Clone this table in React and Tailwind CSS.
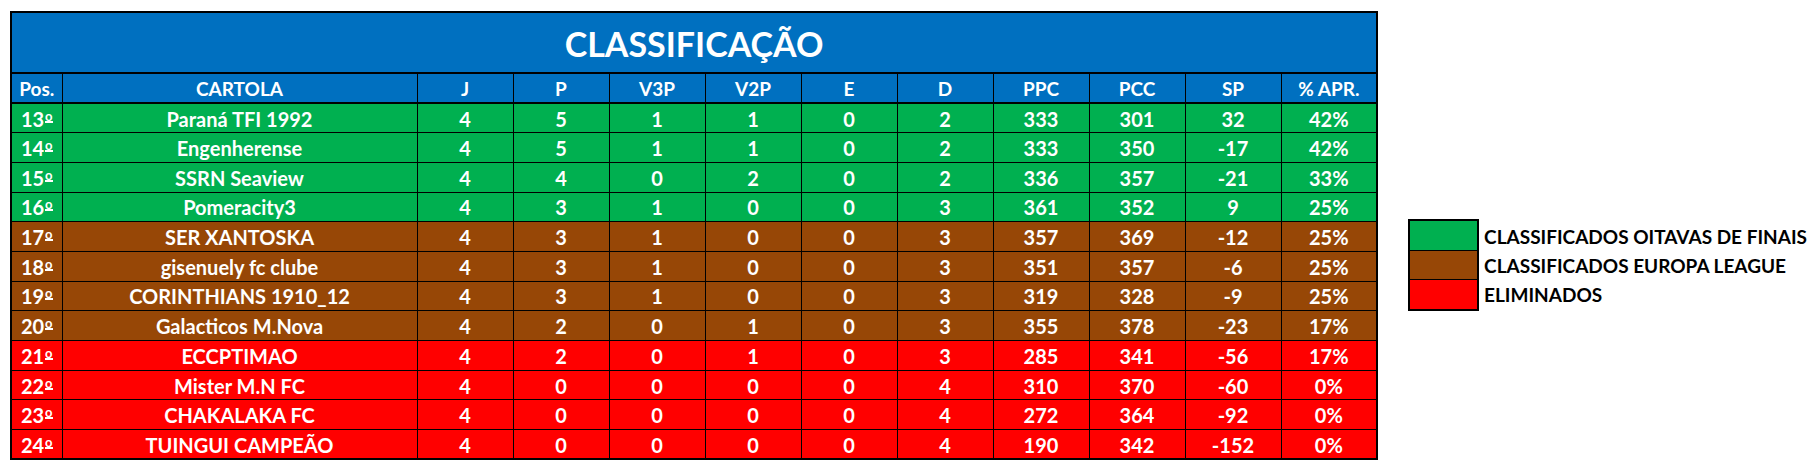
import React from "react";

const rows = [
  ["13", "Paraná TFI 1992", 4, 5, 1, 1, 0, 2, 333, 301, 32, "42%", "g"],
  ["14", "Engenherense", 4, 5, 1, 1, 0, 2, 333, 350, -17, "42%", "g"],
  ["15", "SSRN Seaview", 4, 4, 0, 2, 0, 2, 336, 357, -21, "33%", "g"],
  ["16", "Pomeracity3", 4, 3, 1, 0, 0, 3, 361, 352, 9, "25%", "g"],
  ["17", "SER XANTOSKA", 4, 3, 1, 0, 0, 3, 357, 369, -12, "25%", "b"],
  ["18", "gisenuely fc clube", 4, 3, 1, 0, 0, 3, 351, 357, -6, "25%", "b"],
  ["19", "CORINTHIANS 1910_12", 4, 3, 1, 0, 0, 3, 319, 328, -9, "25%", "b"],
  ["20", "Galacticos M.Nova", 4, 2, 0, 1, 0, 3, 355, 378, -23, "17%", "b"],
  ["21", "ECCPTIMAO", 4, 2, 0, 1, 0, 3, 285, 341, -56, "17%", "r"],
  ["22", "Mister M.N FC", 4, 0, 0, 0, 0, 4, 310, 370, -60, "0%", "r"],
  ["23", "CHAKALAKA FC", 4, 0, 0, 0, 0, 4, 272, 364, -92, "0%", "r"],
  ["24", "TUINGUI CAMPEÃO", 4, 0, 0, 0, 0, 4, 190, 342, -152, "0%", "r"],
];

const bg = { g: "bg-[#00b050]", b: "bg-[#974706]", r: "bg-[#ff0000]" };
const headers = ["J", "P", "V3P", "V2P", "E", "D", "PPC", "PCC", "SP", "% APR."];

export default function App() {
  return (
    <div
      className="flex items-start bg-white w-[1813px] h-[467px] pt-[11px] pl-[10px] text-white font-bold"
      style={{ fontFamily: "Lato, 'Open Sans', sans-serif" }}
    >
      <table className="border-collapse border-2 border-black table-fixed w-[1366px]">
        <colgroup>
          <col className="w-[51px]" />
          <col className="w-[355px]" />
          {headers.map((h) => (
            <col key={h} className="w-[96px]" />
          ))}
        </colgroup>
        <tbody>
          <tr className="h-[61px] bg-[#0070c0]">
            <td colSpan={12} className="border-b-2 border-black text-center text-[34px] leading-none pt-[3px]">
              CLASSIFICAÇÃO
            </td>
          </tr>
          <tr className="h-[30px] bg-[#0070c0] text-[19px] leading-none">
            <td className="border border-black border-b-2 text-center whitespace-nowrap">Pos.</td>
            <td className="border border-black border-b-2 text-center">CARTOLA</td>
            {headers.map((h) => (
              <td key={h} className="border border-black border-b-2 text-center whitespace-nowrap">
                {h}
              </td>
            ))}
          </tr>
          {rows.map((r) => (
            <tr key={r[0]} className={`h-[29.7px] text-[20px] leading-none ${bg[r[12]]}`}>
              <td className="border border-black text-center pt-[1px] whitespace-nowrap overflow-hidden">
                {r[0]}
                <span className="inline-block ml-[1px] text-[13px] leading-[8px] pb-[1px] border-b-2 border-white align-[6px]">
                  o
                </span>
              </td>
              {r.slice(1, 12).map((c, i) => (
                <td key={i} className="border border-black text-center pt-[1px] whitespace-nowrap overflow-hidden">
                  {c}
                </td>
              ))}
            </tr>
          ))}
        </tbody>
      </table>
      <div className="ml-[30px] mt-[208px] flex">
        <div className="flex flex-col border-2 border-black w-[71px]">
          <div className="h-[30px] bg-[#00b050] border-b border-black" />
          <div className="h-[29px] bg-[#974706] border-b border-black" />
          <div className="h-[29px] bg-[#ff0000]" />
        </div>
        <div className="flex flex-col text-black text-[19px] leading-none pl-[5px] pt-[2px]">
          <div className="h-[30px] flex items-center">CLASSIFICADOS OITAVAS DE FINAIS</div>
          <div className="h-[29px] flex items-center">CLASSIFICADOS EUROPA LEAGUE</div>
          <div className="h-[29px] flex items-center">ELIMINADOS</div>
        </div>
      </div>
    </div>
  );
}
